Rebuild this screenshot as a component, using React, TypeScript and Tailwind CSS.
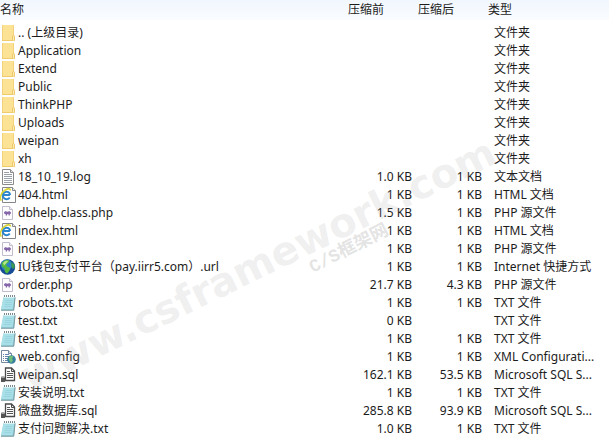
import type { ReactNode } from "react";

type FileKind = "folder" | "log" | "html" | "php" | "url" | "txt" | "config" | "sql";

interface FileEntry {
  name: string;
  kind: FileKind;
  size?: string;
  packed?: string;
  type: string;
}

const files: FileEntry[] = [
  { name: ".. (上级目录)", kind: "folder", type: "文件夹" },
  { name: "Application", kind: "folder", type: "文件夹" },
  { name: "Extend", kind: "folder", type: "文件夹" },
  { name: "Public", kind: "folder", type: "文件夹" },
  { name: "ThinkPHP", kind: "folder", type: "文件夹" },
  { name: "Uploads", kind: "folder", type: "文件夹" },
  { name: "weipan", kind: "folder", type: "文件夹" },
  { name: "xh", kind: "folder", type: "文件夹" },
  { name: "18_10_19.log", kind: "log", size: "1.0 KB", packed: "1 KB", type: "文本文档" },
  { name: "404.html", kind: "html", size: "1 KB", packed: "1 KB", type: "HTML 文档" },
  { name: "dbhelp.class.php", kind: "php", size: "1.5 KB", packed: "1 KB", type: "PHP 源文件" },
  { name: "index.html", kind: "html", size: "1 KB", packed: "1 KB", type: "HTML 文档" },
  { name: "index.php", kind: "php", size: "1 KB", packed: "1 KB", type: "PHP 源文件" },
  { name: "IU钱包支付平台（pay.iirr5.com）.url", kind: "url", size: "1 KB", packed: "1 KB", type: "Internet 快捷方式" },
  { name: "order.php", kind: "php", size: "21.7 KB", packed: "4.3 KB", type: "PHP 源文件" },
  { name: "robots.txt", kind: "txt", size: "1 KB", packed: "1 KB", type: "TXT 文件" },
  { name: "test.txt", kind: "txt", size: "0 KB", type: "TXT 文件" },
  { name: "test1.txt", kind: "txt", size: "1 KB", packed: "1 KB", type: "TXT 文件" },
  { name: "web.config", kind: "config", size: "1 KB", packed: "1 KB", type: "XML Configurati..." },
  { name: "weipan.sql", kind: "sql", size: "162.1 KB", packed: "53.5 KB", type: "Microsoft SQL S..." },
  { name: "安装说明.txt", kind: "txt", size: "1 KB", packed: "1 KB", type: "TXT 文件" },
  { name: "微盘数据库.sql", kind: "sql", size: "285.8 KB", packed: "93.9 KB", type: "Microsoft SQL S..." },
  { name: "支付问题解决.txt", kind: "txt", size: "1.0 KB", packed: "1 KB", type: "TXT 文件" },
];

const drawings: Record<FileKind, ReactNode> = {
  folder: (
    <>
      <path d="M2 0h12v10.500l1 1V16H2z" fill="#fce294" />
      <path d="M2.500 0v16M13.500 0v10" stroke="#f3d27a" fill="none" />
      <path d="M2 15.500h12.500" stroke="#efcb6c" />
      <path d="M12.500 15.500V11l1.200-.8 .8 1v4.300" fill="#fdeab0" stroke="#e6bd58" strokeWidth=".7" />
    </>
  ),
  log: (
    <>
      <path d="M2.500.5h8l3 3v12h-11z" fill="#fff" stroke="#8a8a8a" />
      <path d="M10.500.5v3h3" fill="#ddd" stroke="#8a8a8a" />
      <path d="M4 3.500h5M4 5.500h8M4 7.500h8M4 9.500h8M4 11.500h8M4 13.500h8" stroke="#9aa0a8" />
    </>
  ),
  html: (
    <>
      <path d="M2.500.5h10l3 3v12h-13z" fill="#fff" stroke="#85868a" />
      <path d="M12.500.5v3h3" fill="#eee" stroke="#85868a" />
      <path d="M10 8H3.200M9.700 10.400a3.700 3.700 0 1 1 .5-2.400" fill="none" stroke="#2b86cf" strokeWidth="2" />
      <path d="M1.500 13.500C-1 11.500 1 5.500 5.500 2.800c2.500-1.500 5-1.200 5 .7" fill="none" stroke="#d9d435" strokeWidth="1.600" />
    </>
  ),
  php: (
    <>
      <path d="M2.500 1.500h7l3 3v10h-10z" fill="#fdfcff" stroke="#c2bdcc" />
      <path d="M9.500 1.500v3h3" fill="#f0edf5" stroke="#c2bdcc" />
      <path d="M4 7.500c.5-1.600 2.400-1.500 3.400-.8 1.300-1 3.400-.6 3.600 1 .1 1-.8 1.400-1.200 1.400v1.400H8.600V9.300H7v1.200H5.700V9C4.600 9 4 8.500 4 7.500z" fill="#8466a8" />
    </>
  ),
  url: (
    <>
      <circle cx="7.500" cy="8" r="7.700" fill="#174d96" />
      <circle cx="6.500" cy="6" r="5.500" fill="#2d84c5" />
      <path d="M1.500 4.500C3.500 1 7.500.3 9.500 1.500L8 4 6 5l1 2.500 3 1.200-.5 3-2.500 2.800-2-1.500L4.500 9 2 8z" fill="#54b83f" />
      <path d="M3 4c1.500-2.300 4-2.800 5-2L6.500 4 4 6.500z" fill="#b6e88f" />
      <path d="M11.500 3l3 2.500.3 3-2 1.500-1.500-3z" fill="#3b9a50" />
    </>
  ),
  txt: (
    <>
      <path d="M3.500 2h12L14 15.500H1z" fill="#93d2de" />
      <path d="M3.500 2h10.800L12.300 14H1z" fill="#a9e0e8" />
      <path d="M15 2.500l-1.300 12.700H1" fill="none" stroke="#7c989f" />
      <path d="M5.500 5.500h7M5 7.500h7M4.700 9.500h7M4.300 11.500h7" stroke="#93d0dc" strokeWidth=".8" />
      <path d="M4 1h11" stroke="#53646b" strokeWidth="1.500" strokeDasharray="1 1" />
      <path d="M3.500 2.500h11" stroke="#d7f1f4" />
    </>
  ),
  config: (
    <>
      <path d="M1.500 1.500h7l3 3v9h-10z" fill="#fff" stroke="#7588a0" />
      <path d="M8.500 1.500v3h3" fill="#d6e0ec" stroke="#7588a0" />
      <path d="M3 5.500h1M5 5.500h4M3 7.500h1M5 7.500h4M3 9.500h1M5 9.500h3M3 11.500h1M5 11.500h3" stroke="#6484ad" />
      <circle cx="11.500" cy="10.500" r="4.300" fill="#377f9e" />
      <path d="M8.500 8.500c1.500-2 4-2 5-1L12 9.500l1 2-2 2.500-1.500-2z" fill="#6fbd79" />
    </>
  ),
  sql: (
    <>
      <path d="M5.500 1h6l3 3v9.500h-9z" fill="#fff" stroke="#4a4a4a" strokeWidth="1.300" />
      <path d="M11.500 1v3.500h3" fill="none" stroke="#4a4a4a" />
      <path d="M7 4.500h3M7 6.500h6M7 8.500h6M7 10.500h6" stroke="#555" />
      <path d="M1 10h4v5H1z" fill="#555" />
      <ellipse cx="3" cy="10" rx="2" ry="1" fill="#aaa" />
    </>
  ),
};

const FileIcon = ({ kind }: { kind: FileKind }) => (
  <svg viewBox="0 0 16 16" className="h-4 w-4 shrink-0" aria-hidden="true">
    {drawings[kind]}
  </svg>
);

const Watermark = () => (
  <div className="pointer-events-none absolute inset-0 select-none" aria-hidden="true">
    <span className="absolute left-[258px] top-[264px] -translate-x-1/2 -translate-y-1/2 -rotate-[26deg] whitespace-nowrap font-['DejaVu_Sans'] text-[40px] leading-none font-bold text-[#a0a0a0]/18">
      www.csframework.com
    </span>
    <span className="absolute left-[349px] top-[249px] -translate-x-1/2 -translate-y-1/2 -rotate-[27deg] whitespace-nowrap font-['Liberation_Mono','Noto_Sans_CJK_SC',monospace] text-[18px] leading-none font-bold text-[#a0a0a0]/30">
      C/S框架网
    </span>
  </div>
);

const App = () => (
  <main className="relative min-h-screen overflow-hidden bg-white font-['Noto_Sans','Noto_Sans_CJK_SC',sans-serif] text-[12px] leading-[18px] text-[#1c1c1c]">
    <table className="w-full table-fixed border-collapse">
      <colgroup>
        <col />
        <col className="w-[70px]" />
        <col className="w-[70px]" />
        <col className="w-[124px]" />
      </colgroup>
      <thead className="bg-gradient-to-b from-[#f1f7fe] to-[#fafcff] text-left">
        <tr className="h-5 align-top">
          <th className="p-0 pt-px font-normal">名称</th>
          <th className="p-0 pt-px pl-[3px] font-normal">压缩前</th>
          <th className="p-0 pt-px pl-[3px] font-normal">压缩后</th>
          <th className="p-0 pt-px pl-[3px] font-normal">类型</th>
        </tr>
      </thead>
      <tbody className="before:block before:h-1">
        {files.map((file) => (
          <tr key={file.name}>
            <td className="p-0">
              <div className="flex h-[18px] items-center gap-0.5">
                <FileIcon kind={file.kind} />
                <span className="whitespace-nowrap">{file.name}</span>
              </div>
            </td>
            <td className="p-0 pr-[3px] text-right">{file.size}</td>
            <td className="p-0 pr-[3px] text-right">{file.packed}</td>
            <td className="p-0 pl-[9px] whitespace-nowrap">{file.type}</td>
          </tr>
        ))}
      </tbody>
    </table>
    <Watermark />
  </main>
);

export default App;
